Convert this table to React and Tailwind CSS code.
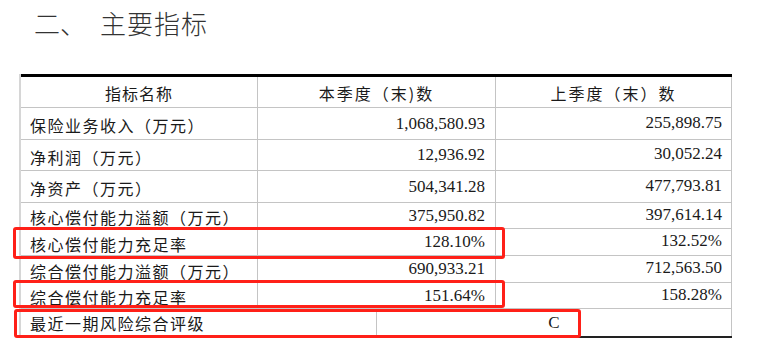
import React from "react";

const cjk = { fontFamily: '"Noto Sans CJK SC", "Noto Sans", sans-serif' };
const num = { fontFamily: '"Liberation Serif", "Times New Roman", serif' };

const rows = [
  { label: "保险业务收入（万元）", a: "1,068,580.93", b: "255,898.75", h: "h-[32px]" },
  { label: "净利润（万元）", a: "12,936.92", b: "30,052.24", h: "h-[31px]" },
  { label: "净资产（万元）", a: "504,341.28", b: "477,793.81", h: "h-[32px]" },
  { label: "核心偿付能力溢额（万元）", a: "375,950.82", b: "397,614.14", h: "h-[26px]" },
  { label: "核心偿付能力充足率", a: "128.10%", b: "132.52%", h: "h-[27px]" },
  { label: "综合偿付能力溢额（万元）", a: "690,933.21", b: "712,563.50", h: "h-[27px]" },
  { label: "综合偿付能力充足率", a: "151.64%", b: "158.28%", h: "h-[26px]" },
];

export default function App() {
  return (
    <div className="relative w-[759px] h-[362px] bg-white overflow-hidden text-[#1a1a1a]">
      <div
        className="flex pt-[5px] pl-[34px] h-[74px] text-[26px] font-light text-[#333] leading-[36px]"
        style={cjk}
      >
        <span className="w-[66px]">二、</span>
        <span className="tracking-[1px]">主要指标</span>
      </div>

      <div className="ml-[19px] w-[713px] border-l-2 border-[#d6d6d6]">
        <div className="border-t-[3px] border-black">
          <div className="flex h-[31px] border-b border-[#c4c4c4] text-[16px]" style={cjk}>
            <div className="w-[237px] border-r border-[#c4c4c4] flex items-center justify-center tracking-[1px] pt-[1px]">
              指标名称
            </div>
            <div className="w-[238px] border-r border-[#c4c4c4] flex items-center justify-center tracking-[2px] pt-[1px]">
              本季度（末)数
            </div>
            <div className="w-[236px] border-r border-[#c4c4c4] flex items-center justify-center tracking-[2px] pt-[1px]">
              上季度（末）数
            </div>
          </div>
          {rows.map((r) => (
            <div key={r.label} className={`flex ${r.h} border-b border-[#c4c4c4]`}>
              <div
                className="w-[237px] border-r border-[#c4c4c4] flex items-center pl-[9px] pt-[3px] text-[16px] tracking-[1.5px] whitespace-nowrap"
                style={cjk}
              >
                {r.label}
              </div>
              <div
                className="w-[238px] border-r border-[#c4c4c4] flex items-center justify-end pr-[10px] text-[17px]"
                style={num}
              >
                {r.a}
              </div>
              <div
                className="w-[236px] border-r border-[#c4c4c4] flex items-center justify-end pr-[9px] text-[17px] pb-[2px]"
                style={num}
              >
                {r.b}
              </div>
            </div>
          ))}
          <div className="flex h-[29px] border-b-[2px] border-[#222]">
            <div
              className="w-[356px] border-r border-[#c4c4c4] flex items-center pl-[9px] pt-[1px] text-[16px] tracking-[1.5px]"
              style={cjk}
            >
              最近一期风险综合评级
            </div>
            <div
              className="w-[355px] border-r border-[#c4c4c4] flex items-center justify-center text-[17px]"
              style={num}
            >
              C
            </div>
          </div>
        </div>
      </div>

      <div className="absolute left-[13px] top-[227px] w-[492px] h-[32px] border-[3px] border-[#ff2018] rounded-[3px]" />
      <div className="absolute left-[13px] top-[280px] w-[492px] h-[28px] border-[3px] border-[#ff2018] rounded-[3px]" />
      <div className="absolute left-[14px] top-[309px] w-[567px] h-[29px] border-[3px] border-[#ff2018] rounded-[3px]" />
    </div>
  );
}
